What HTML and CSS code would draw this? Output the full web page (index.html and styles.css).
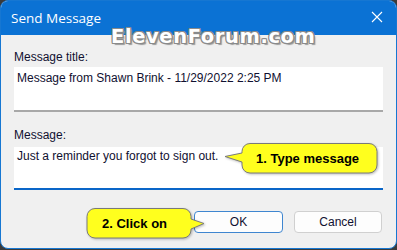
FILE: index.html
```html
<!DOCTYPE html>
<html>
<head>
<meta charset="utf-8">
<link rel="stylesheet" href="styles.css">
</head>
<body>
<div class="window">
  <div class="titlebar">
    <span class="title">Send Message</span>
    <svg class="close" width="12" height="12" viewBox="0 0 12 12"><path d="M1 1L11 11M11 1L1 11" stroke="#fff" stroke-width="1.1" fill="none"/></svg>
  </div>
  <div class="content">
    <div class="label">Message title:</div>
    <div class="textbox">Message from Shawn Brink - 11/29/2022 2:25 PM</div>
    <div class="label label2">Message:</div>
    <div class="textbox focused">Just a reminder you forgot to sign out.</div>
    <div class="buttons">
      <div class="btn default">OK</div>
      <div class="btn">Cancel</div>
    </div>
  </div>
  <div class="watermark">ElevenForum.com</div>
  <div class="callout callout1">
    <svg width="160" height="36" viewBox="0 0 160 36"><path d="M26 3.5 H145 a8 8 0 0 1 8 8 V25 a8 8 0 0 1 -8 8 H26 a8 8 0 0 1 -8 -8 V22 L1 16.5 L18 13 V11.5 a8 8 0 0 1 8 -8 Z" fill="#ffff1e" stroke="#7a7a7a" stroke-width="1"/></svg>
    <span class="ctext">1. Type message</span>
  </div>
  <div class="callout callout2">
    <svg width="124" height="36" viewBox="0 0 124 36"><path d="M12 3.5 H100 a8 8 0 0 1 8 8 V14 L121 18.5 L108 24 V25 a8 8 0 0 1 -8 8 H12 a8 8 0 0 1 -8 -8 V11.5 a8 8 0 0 1 8 -8 Z" fill="#ffff1e" stroke="#7a7a7a" stroke-width="1"/></svg>
    <span class="ctext">2. Click on</span>
  </div>
</div>
</body>
</html>
```
FILE: styles.css
```css
html, body {
  margin: 0;
  padding: 0;
  background: #3a3a3a;
}
body {
  width: 397px;
  height: 250px;
  overflow: hidden;
}
.window {
  position: relative;
  width: 397px;
  height: 249px;
  box-sizing: border-box;
  border: 1px solid #1677d2;
  border-radius: 8px;
  overflow: hidden;
  background: #f0f0f0;
  display: flex;
  flex-direction: column;
  font-family: "Liberation Sans", Arial, sans-serif;
}
.titlebar {
  height: 34px;
  background: #0b72d4;
  color: #fff;
  display: flex;
  align-items: center;
  justify-content: space-between;
  padding: 0 13px 0 10px;
  flex: none;
}
.title {
  font-family: "Open Sans", "Noto Sans", sans-serif;
  font-size: 13.5px;
  margin-top: -1px;
}
.close {
  margin-top: -2px;
}
.content {
  padding: 12px 13px 0 13px;
  display: flex;
  flex-direction: column;
  font-size: 12px;
  color: #101030;
}
.label {
  height: 20px;
  line-height: 20px;
}
.label2 {
  margin-top: 13px;
  height: 22px;
  line-height: 20px;
}
.textbox {
  background: #fff;
  border-bottom: 2px solid #a8a8a8;
  padding: 4px 3px 0 3px;
  box-sizing: border-box;
  height: 45px;
}
.textbox.focused {
  height: 43px;
  border-bottom-color: #0a66c8;
  padding-top: 2px;
}
.buttons {
  display: flex;
  justify-content: flex-end;
  gap: 11px;
  margin-top: 21px;
  padding-right: 1px;
}
.btn {
  width: 88px;
  height: 22px;
  box-sizing: border-box;
  border: 1px solid #d0d0d0;
  border-radius: 4px;
  background: #fdfdfd;
  display: flex;
  align-items: center;
  justify-content: center;
  font-size: 12px;
  color: #101030;
}
.btn.default {
  width: 89px;
  border-color: #3f86d0;
}
.watermark {
  position: absolute;
  left: 110px;
  top: 24px;
  font-family: "DejaVu Sans", sans-serif;
  font-weight: bold;
  font-size: 19.5px;
  color: #fff;
  letter-spacing: 0.6px;
  text-shadow: 1px 0 0 #8a8a8a, -1px 0 0 #8a8a8a, 0 1px 0 #8a8a8a, 0 -1px 0 #8a8a8a, 1px 1px 0 #8a8a8a, -1px -1px 0 #8a8a8a, 1px -1px 0 #8a8a8a, -1px 1px 0 #8a8a8a, 2px 2px 1px #9a9a9a;
}
.callout {
  position: absolute;
  display: flex;
  align-items: center;
}
.callout svg {
  position: absolute;
  left: 0;
  top: 0;
  filter: drop-shadow(1px 1px 1px rgba(0,0,0,0.25));
}
.ctext {
  position: relative;
  font-family: "Liberation Sans", Arial, sans-serif;
  font-weight: bold;
  font-size: 13px;
  color: #000;
}
.callout1 {
  left: 223px;
  top: 139px;
  width: 160px;
  height: 36px;
}
.callout1 .ctext {
  margin-left: 32px;
  margin-top: 1px;
}
.callout2 {
  left: 82px;
  top: 204px;
  width: 124px;
  height: 36px;
}
.callout2 .ctext {
  margin-left: 19px;
  margin-top: 1px;
}
```
